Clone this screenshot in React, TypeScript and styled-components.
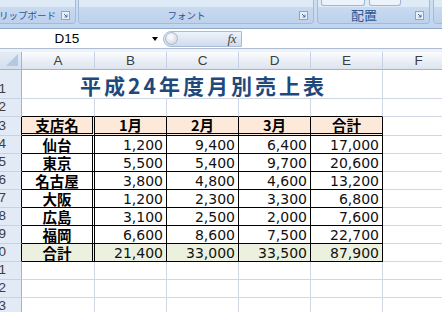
import React from 'react';
import styled, { createGlobalStyle } from 'styled-components';

const JP = '"Noto Sans CJK JP", "Noto Sans", sans-serif';
const NUM = '"DejaVu Sans", "Liberation Sans", sans-serif';
const HEAD = '"Liberation Sans", Arial, sans-serif';
const GRID = '#d0d7e5';

const Global = createGlobalStyle`
  html, body { margin: 0; padding: 0; background: #fff; }
  body { width: 442px; height: 312px; overflow: hidden; }
`;

const Screen = styled.div`
  width: 442px;
  height: 312px;
  overflow: hidden;
  display: flex;
  flex-direction: column;
  font-family: ${JP};
`;

/* ---------- Ribbon ---------- */
const Ribbon = styled.div`
  flex: none;
  height: 29px;
  box-sizing: border-box;
  display: flex;
  align-items: flex-start;
  background: linear-gradient(#cfdff2, #c2d5ee);
  border-bottom: 1px solid #8ea8ca;
`;

const Group = styled.div<{ $w: number; $gap?: number; $noLeft?: boolean }>`
  flex: none;
  width: ${(p) => p.$w}px;
  margin-left: ${(p) => p.$gap ?? 0}px;
  height: 24px;
  box-sizing: border-box;
  display: flex;
  flex-direction: column;
  border: 1px solid #a3bad8;
  border-top: none;
  border-left: ${(p) => (p.$noLeft ? 'none' : '1px solid #a3bad8')};
  border-radius: ${(p) => (p.$noLeft ? '0 0 4px 0' : '0 0 4px 4px')};
  overflow: hidden;
`;

const ButtonArea = styled.div`
  flex: none;
  height: 7px;
  display: flex;
  gap: 4px;
  padding-left: 3px;
  background: #dfeaf7;
`;

const MiniButton = styled.div<{ $w: number }>`
  width: ${(p) => p.$w}px;
  height: 6px;
  box-sizing: border-box;
  border: 1px solid #9fb5d3;
  border-top: none;
  border-radius: 0 0 3px 3px;
  background: #edf3fb;
`;

const LabelStrip = styled.div<{ $end?: boolean }>`
  flex: 1;
  display: flex;
  align-items: center;
  justify-content: ${(p) => (p.$end ? 'flex-end' : 'flex-start')};
  background: linear-gradient(#c9daf0, #bcd1ec);
  overflow: hidden;
  padding-right: 5px;
`;

const GroupLabel = styled.span<{ $size?: number; $grow?: boolean }>`
  flex: ${(p) => (p.$grow ? '1' : 'none')};
  text-align: center;
  white-space: nowrap;
  font-family: ${JP};
  font-size: ${(p) => p.$size ?? 9.5}px;
  line-height: 14px;
  color: #2c5591;
  margin-right: 5px;
`;

const Launcher = () => (
  <svg width="9" height="9" viewBox="0 0 9 9" style={{ flex: 'none' }}>
    <rect x="0.5" y="0.5" width="8" height="8" fill="#e8eff8" stroke="#8ca4c6" />
    <path d="M3 3 L6 6 M6 3.6 V6 H3.6" stroke="#4f6e9c" fill="none" />
  </svg>
);

/* ---------- Formula bar ---------- */
const FormulaBar = styled.div`
  flex: none;
  height: 20px;
  box-sizing: border-box;
  display: flex;
  align-items: center;
  background: #fff;
  border-bottom: 1px solid #aebdd2;
`;

const NameBox = styled.div`
  flex: none;
  width: 163px;
  display: flex;
  align-items: center;
`;

const NameText = styled.span`
  width: 134px;
  text-align: center;
  font-family: ${HEAD};
  font-size: 13.5px;
  color: #000;
`;

const DropArrow = styled.span`
  margin-left: 18px;
  width: 0;
  height: 0;
  border-left: 3px solid transparent;
  border-right: 3px solid transparent;
  border-top: 4px solid #000;
`;

const FxButton = styled.div`
  flex: none;
  width: 79px;
  height: 16px;
  box-sizing: border-box;
  display: flex;
  align-items: center;
  justify-content: space-between;
  border: 1px solid #a9bcd6;
  border-radius: 8px 0 0 8px;
  background: linear-gradient(#eef3fa, #cfdcee);
  padding: 0 5px 0 1px;
`;

const Knob = styled.span`
  width: 13px;
  height: 13px;
  border-radius: 50%;
  box-sizing: border-box;
  border: 1px solid #aab8cb;
  background: radial-gradient(circle at 40% 35%, #ffffff, #c5cfdc);
`;

const Fx = styled.span`
  font-family: "Liberation Serif", "DejaVu Serif", serif;
  font-style: italic;
  font-size: 13px;
  color: #444;
  letter-spacing: -0.5px;
`;

const FormulaInput = styled.div`
  flex: 1;
  height: 19px;
  background: #fff;
`;

const Spacer = styled.div`
  flex: none;
  height: 3px;
  background: #eef2f7;
`;

/* ---------- Sheet ---------- */
const Sheet = styled.div`
  flex: none;
  display: grid;
  grid-template-columns: 22px 73px 72px 72px 72px 72px 72px;
  grid-template-rows: 18px 29px 18px 19px repeat(10, 18px);
  width: 455px;
`;

const Corner = styled.div`
  box-sizing: border-box;
  background: linear-gradient(#e4ecf6, #d3dfee);
  border-right: 1px solid #9eb6ce;
  border-bottom: 1px solid #9eb6ce;
  display: flex;
  align-items: flex-end;
  justify-content: flex-end;
  padding: 0 3px 3px 0;
`;

const CornerTriangle = styled.div`
  width: 12px;
  height: 12px;
  background: #b6c8e0;
  clip-path: polygon(100% 0, 100% 100%, 0 100%);
`;

const ColHead = styled.div`
  box-sizing: border-box;
  background: linear-gradient(#fbfcfe, #e9eef5 55%, #dde4ee);
  border-right: 1px solid #c6d2e1;
  border-bottom: 1px solid #9eb6ce;
  display: flex;
  align-items: center;
  justify-content: center;
  font-family: ${HEAD};
  font-size: 13.5px;
  color: #3d3d3d;
`;

const RowHead = styled.div<{ $edge?: string }>`
  box-sizing: border-box;
  background: #e2eaf5;
  border-right: 1px solid ${(p) => p.$edge ?? '#9eb6ce'};
  border-bottom: 1px solid #c5d3e4;
  display: flex;
  align-items: flex-end;
  justify-content: flex-end;
  padding: 0 15px 1px 0;
  overflow: hidden;
  white-space: nowrap;
  font-family: ${HEAD};
  font-size: 13.5px;
  line-height: 16px;
  color: #3d3d3d;
`;

const Cell = styled.div<{ $bg?: string; $right?: string; $bottom?: string; $span?: number }>`
  box-sizing: border-box;
  min-width: 0;
  grid-column: ${(p) => (p.$span ? `span ${p.$span}` : 'auto')};
  background: ${(p) => p.$bg ?? '#fff'};
  border-right: ${(p) => p.$right ?? `1px solid ${GRID}`};
  border-bottom: ${(p) => p.$bottom ?? `1px solid ${GRID}`};
  display: flex;
  overflow: hidden;
  white-space: nowrap;
`;

const TitleCell = styled(Cell)`
  align-items: flex-end;
  justify-content: center;
  padding-left: 3px;
  font-family: ${JP};
  font-weight: 700;
  font-size: 21px;
  line-height: 26px;
  letter-spacing: 3px;
  color: #1f497d;
`;

const TextCell = styled(Cell)`
  align-items: center;
  justify-content: center;
  font-family: ${JP};
  font-weight: 700;
  font-size: 14.5px;
  line-height: 16px;
  color: #000;
`;

const NumCell = styled(Cell)`
  align-items: center;
  justify-content: flex-end;
  padding-right: 3px;
  font-family: ${NUM};
  font-size: 14px;
  line-height: 16px;
  color: #111;
`;

const LINE = '1px solid #000';
const DOUBLE = '3px double #000';
const HEAD_BG = '#fde9d9';
const TOTAL_BG = '#ebf1de';

const headers = ['支店名', '1月', '2月', '3月', '合計'];
const data: [string, number, number, number, number][] = [
  ['仙台', 1200, 9400, 6400, 17000],
  ['東京', 5500, 5400, 9700, 20600],
  ['名古屋', 3800, 4800, 4600, 13200],
  ['大阪', 1200, 2300, 3300, 6800],
  ['広島', 3100, 2500, 2000, 7600],
  ['福岡', 6600, 8600, 7500, 22700],
];
const total: [string, number, number, number, number] = ['合計', 21400, 33000, 33500, 87900];

const fmt = (n: number) => n.toLocaleString('en-US');

export default function App() {
  const bodyRows = [...data, total];
  return (
    <>
      <Global />
      <Screen>
        <Ribbon>
          <Group $w={76} $noLeft>
            <ButtonArea />
            <LabelStrip $end>
              <GroupLabel>クリップボード</GroupLabel>
              <Launcher />
            </LabelStrip>
          </Group>
          <Group $w={236} $gap={2}>
            <ButtonArea />
            <LabelStrip>
              <GroupLabel $grow>フォント</GroupLabel>
              <Launcher />
            </LabelStrip>
          </Group>
          <Group $w={113} $gap={3}>
            <ButtonArea>
              <MiniButton $w={44} />
              <MiniButton $w={32} />
            </ButtonArea>
            <LabelStrip>
              <GroupLabel $grow $size={13}>配置</GroupLabel>
              <Launcher />
            </LabelStrip>
          </Group>
          <Group $w={20} $gap={3}>
            <ButtonArea />
            <LabelStrip />
          </Group>
        </Ribbon>

        <FormulaBar>
          <NameBox>
            <NameText>D15</NameText>
            <DropArrow />
          </NameBox>
          <FxButton>
            <Knob />
            <Fx>fx</Fx>
          </FxButton>
          <FormulaInput />
        </FormulaBar>
        <Spacer />

        <Sheet>
          <Corner>
            <CornerTriangle />
          </Corner>
          {['A', 'B', 'C', 'D', 'E', 'F'].map((c) => (
            <ColHead key={c}>{c}</ColHead>
          ))}

          <RowHead>1</RowHead>
          <TitleCell $span={5}>平成24年度月別売上表</TitleCell>
          <Cell />

          <RowHead>2</RowHead>
          {[0, 1, 2, 3, 4].map((i) => (
            <Cell key={i} $bottom={LINE} />
          ))}
          <Cell />

          <RowHead $edge="#000">3</RowHead>
          {headers.map((h, i) => (
            <TextCell key={h} $bg={HEAD_BG} $bottom={DOUBLE} $right={i === 0 ? DOUBLE : LINE}>
              {h}
            </TextCell>
          ))}
          <Cell />

          {bodyRows.map((r, ri) => {
            const bg = ri === bodyRows.length - 1 ? TOTAL_BG : '#fff';
            return (
              <React.Fragment key={ri}>
                <RowHead $edge="#000">{ri + 4}</RowHead>
                <TextCell $bg={bg} $right={DOUBLE} $bottom={LINE}>
                  {r[0]}
                </TextCell>
                {[r[1], r[2], r[3], r[4]].map((n, ci) => (
                  <NumCell key={ci} $bg={bg} $right={LINE} $bottom={LINE}>
                    {fmt(n)}
                  </NumCell>
                ))}
                <Cell />
              </React.Fragment>
            );
          })}

          {[11, 12, 13].map((n) => (
            <React.Fragment key={n}>
              <RowHead>{n}</RowHead>
              {[0, 1, 2, 3, 4, 5].map((i) => (
                <Cell key={i} />
              ))}
            </React.Fragment>
          ))}
        </Sheet>
      </Screen>
    </>
  );
}
